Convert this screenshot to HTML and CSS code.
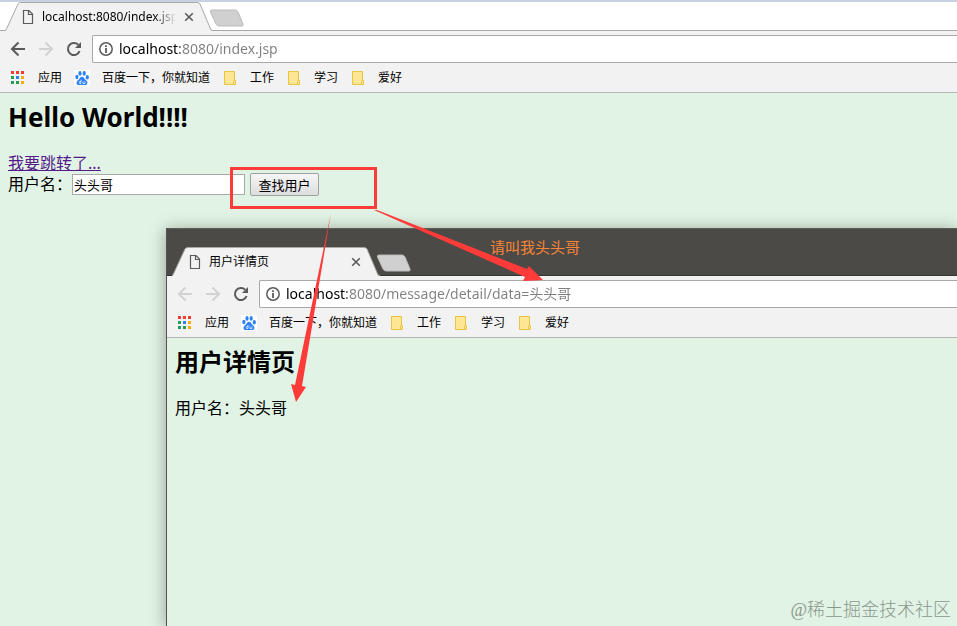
FILE: index.html
```html
<!DOCTYPE html>
<html lang="zh-CN">
<head>
  <meta charset="utf-8">
  <title>localhost:8080/index.jsp</title>
  <link rel="stylesheet" href="styles.css">
</head>
<body>
  <!-- shared icons -->
  <svg class="sprite" aria-hidden="true">
    <symbol id="tab-shape" viewBox="0 0 208 29" preserveAspectRatio="none">
      <path class="tab-fill" d="M0 29 L1 28 L13 2 Q14 .5 16 .5 H192 Q194 .5 195 2 L206 28 L208 29Z"/>
      <path class="tab-edge" d="M0 28.5 L1 28 L13 2 Q14 .5 16 .5 H192 Q194 .5 195 2 L206 28 L208 28.5"/>
    </symbol>
    <symbol id="new-tab" viewBox="0 0 36 18">
      <path class="new-tab-shape" d="M3 1 H26 Q28 1 29 3 L34 15 Q34.500 17 33 17 H10 Q8 17 7 15 L1.500 3 Q1 1 3 1Z"/>
    </symbol>
    <symbol id="page" viewBox="0 0 12 16">
      <path d="M1.500 1.500 H7 L10.500 5 V14.500 H1.500Z M6.500 1.500 V5.500 H10.500" fill="none" stroke="#5a5a5a" stroke-width="1.200"/>
    </symbol>
    <symbol id="close" viewBox="0 0 10 10">
      <path d="M1.200 1.200 L8.800 8.800 M8.800 1.200 L1.200 8.800" stroke="#5a5a5a" stroke-width="1.600"/>
    </symbol>
    <symbol id="back" viewBox="0 0 16 16">
      <path d="M15 8 H2.500 M8.500 1.500 L2 8 L8.500 14.500" fill="none" stroke="currentColor" stroke-width="2"/>
    </symbol>
    <symbol id="forward" viewBox="0 0 16 16">
      <path d="M1 8 H13.500 M7.500 1.500 L14 8 L7.500 14.500" fill="none" stroke="currentColor" stroke-width="2"/>
    </symbol>
    <symbol id="reload" viewBox="0 0 16 16">
      <path d="M13.600 10 A6 6 0 1 1 12.200 3.800" fill="none" stroke="currentColor" stroke-width="2"/>
      <path d="M15 1 V7 H9Z" fill="currentColor"/>
    </symbol>
    <symbol id="info" viewBox="0 0 14 14">
      <circle cx="7" cy="7" r="6.200" fill="none" stroke="#5a5a5a" stroke-width="1.500"/>
      <path d="M6.100 3.200 H7.900 V4.900 H6.100Z M6.100 6.100 H7.900 V10.900 H6.100Z" fill="#5a5a5a"/>
    </symbol>
    <symbol id="apps" viewBox="0 0 16 16">
      <path d="M1 1h3v3h-3z M6 1h3v3h-3z M11 1h3v3h-3z" fill="#f33b30"/>
      <path d="M1 6h3v3h-3z M1 11h3v3h-3z M6 11h3v3h-3z" fill="#259b57"/>
      <path d="M6 6h3v3h-3z" fill="#2b85f5"/>
      <path d="M11 6h3v3h-3z M11 11h3v3h-3z" fill="#f8ae06"/>
    </symbol>
    <symbol id="baidu" viewBox="0 0 16 16">
      <path d="M0 0h16v16H0z" fill="#fff"/>
      <g fill="#2c82f6">
        <ellipse cx="2.900" cy="7" rx="1.600" ry="2.200"/>
        <ellipse cx="6" cy="3.400" rx="1.600" ry="2.300"/>
        <ellipse cx="10.200" cy="3.400" rx="1.600" ry="2.300"/>
        <ellipse cx="13.300" cy="7.200" rx="1.600" ry="2.200"/>
        <path d="M8 6.700 C9.800 6.700 10.300 8.700 11.800 9.900 C15 12.500 13 15.500 10.500 15.100 C8.600 14.800 7.400 14.800 5.500 15.100 C2.500 15.500 1.200 12.300 4.300 9.900 C5.700 8.700 6.200 6.700 8 6.700Z"/>
      </g>
      <path d="M7 9.800 V13.500 H5.600 Q4.700 12.500 5.600 11.500 H7 M9 11.400 V13.500 H11 V11.400" fill="none" stroke="#fff" stroke-width=".7"/>
    </symbol>
    <symbol id="folder" viewBox="0 0 16 16">
      <path d="M2.500 1.500 H12.500 V10.500 H13.500 V14.500 H2.500Z" fill="#ffe695" stroke="#e8c443"/>
      <path d="M11.500 14.500 V11.500 Q11.500 10.500 12.500 10.500" fill="none" stroke="#e8c443"/>
    </symbol>
  </svg>

  <div class="browser">
    <div class="tabstrip">
      <div class="tab">
        <svg class="tab-bg"><use href="#tab-shape"/></svg>
        <svg class="tab-icon"><use href="#page"/></svg>
        <span class="tab-title fade">localhost:8080/index.jsp</span>
        <button class="tab-close" aria-label="关闭"><svg><use href="#close"/></svg></button>
      </div>
      <button class="new-tab" aria-label="新标签页"><svg><use href="#new-tab"/></svg></button>
    </div>
    <div class="toolbar">
      <button class="nav" aria-label="后退"><svg><use href="#back"/></svg></button>
      <button class="nav" aria-label="前进" disabled><svg><use href="#forward"/></svg></button>
      <button class="nav" aria-label="重新加载"><svg><use href="#reload"/></svg></button>
      <label class="omnibox">
        <svg><use href="#info"/></svg>
        <input class="url" type="text" aria-label="地址" value="localhost:8080/index.jsp">
      </label>
    </div>
    <nav class="bookmarks">
      <a href="#"><svg><use href="#apps"/></svg>应用</a>
      <a href="#"><svg><use href="#baidu"/></svg>百度一下，你就知道</a>
      <a href="#"><svg><use href="#folder"/></svg>工作</a>
      <a href="#"><svg><use href="#folder"/></svg>学习</a>
      <a href="#"><svg><use href="#folder"/></svg>爱好</a>
    </nav>
    <main class="content">
      <h2 class="latin">Hello World!!!!</h2>
      <a class="jump" href="#">我要跳转了...</a>
      <form class="row">
        <label for="name">用户名：</label>
        <input id="name" class="name" type="text" value="头头哥">
        <button class="search" type="button">查找用户</button>
      </form>
    </main>
  </div>

  <div class="browser popup">
    <div class="tabstrip">
      <div class="tab">
        <svg class="tab-bg"><use href="#tab-shape"/></svg>
        <svg class="tab-icon"><use href="#page"/></svg>
        <span class="tab-title">用户详情页</span>
        <button class="tab-close" aria-label="关闭"><svg><use href="#close"/></svg></button>
      </div>
      <button class="new-tab" aria-label="新标签页"><svg><use href="#new-tab"/></svg></button>
    </div>
    <div class="toolbar">
      <button class="nav" aria-label="后退" disabled><svg><use href="#back"/></svg></button>
      <button class="nav" aria-label="前进" disabled><svg><use href="#forward"/></svg></button>
      <button class="nav" aria-label="重新加载"><svg><use href="#reload"/></svg></button>
      <label class="omnibox">
        <svg><use href="#info"/></svg>
        <input class="url" type="text" aria-label="地址" value="localhost:8080/message/detail/data=头头哥">
      </label>
    </div>
    <nav class="bookmarks">
      <a href="#"><svg><use href="#apps"/></svg>应用</a>
      <a href="#"><svg><use href="#baidu"/></svg>百度一下，你就知道</a>
      <a href="#"><svg><use href="#folder"/></svg>工作</a>
      <a href="#"><svg><use href="#folder"/></svg>学习</a>
      <a href="#"><svg><use href="#folder"/></svg>爱好</a>
    </nav>
    <main class="content">
      <h2>用户详情页</h2>
      <p class="row">用户名：头头哥</p>
    </main>
  </div>

  <!-- annotations -->
  <div class="frame"></div>
  <svg class="arrows" width="600" height="420" aria-hidden="true">
    <path d="M374 210 L377 210 L527 269 L529 266 L543 280 L523 281 L525 277Z"/>
    <path d="M331 213 L302 386 L306 387 L296 402 L291 384 L295 385Z"/>
  </svg>
  <div class="note">请叫我头头哥</div>
  <div class="watermark">@稀土掘金技术社区</div>
</body>
</html>
```

FILE: styles.css
```css
* {
  box-sizing: border-box;
}

body {
  margin: 0;
  position: relative;
  min-height: 100vh;
  overflow: hidden;
  font-family: "Noto Sans", "Noto Sans CJK SC", sans-serif;
  font-size: 16px;
  color: #000;
  background: #e1f3e4;
}

button {
  padding: 0;
  border: none;
  background: none;
  font-family: inherit;
}

input {
  font-family: inherit;
}

svg {
  display: block;
  flex: none;
}

.sprite {
  position: absolute;
  width: 0;
  height: 0;
}

/* tabs */
.tabstrip {
  display: flex;
  align-items: flex-end;
  height: 31px;
  padding-left: 5px;
  border-top: 2px solid #c7d1e3;
  background: linear-gradient(#a9a9a9, #a9a9a9) bottom / 100% 1px no-repeat #fff;
}

.tab {
  position: relative;
  display: flex;
  align-items: center;
  width: 208px;
  height: 29px;
  padding-left: 17px;
}

.tab-bg {
  position: absolute;
  left: 0;
  top: 0;
  width: 100%;
  height: 100%;
}

.tab-fill {
  fill: #f2f2f2;
}

.tab-edge {
  fill: none;
  stroke: #a9a9a9;
}

.tab-icon {
  position: relative;
  width: 12px;
  height: 16px;
}

.tab-title {
  position: relative;
  width: 134px;
  margin-left: 8px;
  overflow: hidden;
  white-space: nowrap;
  font-size: 12px;
  line-height: 20px;
}

.fade {
  -webkit-mask-image: linear-gradient(to right, #000 112px, transparent 134px);
  mask-image: linear-gradient(to right, #000 112px, transparent 134px);
}

.tab-close {
  position: relative;
  margin-left: 8px;
}

.tab-close svg {
  width: 10px;
  height: 10px;
}

.new-tab {
  align-self: flex-end;
  margin: 0 0 4px -4px;
}

.new-tab svg {
  width: 36px;
  height: 18px;
}

.new-tab-shape {
  fill: #d0d0d0;
  stroke: #b9b9b9;
}

/* toolbar */
.toolbar {
  display: flex;
  padding: 4px 0 0 4px;
  background: #f2f2f2;
}

.nav {
  display: flex;
  align-items: center;
  justify-content: center;
  width: 28px;
  height: 28px;
  color: #5a5a5a;
}

.nav:disabled {
  color: #d2d2d2;
}

.nav svg {
  width: 16px;
  height: 16px;
}

.omnibox {
  display: flex;
  flex: 1;
  align-items: center;
  height: 28px;
  margin-left: 4px;
  padding-left: 6px;
  border: 1px solid #a9a9a9;
  border-right: none;
  border-radius: 2px 0 0 2px;
  background: #fff;
}

.omnibox svg {
  width: 14px;
  height: 14px;
}

.url {
  flex: 1;
  min-width: 0;
  height: 24px;
  margin-left: 6px;
  padding: 0 0 2px;
  border: none;
  outline: none;
  font-size: 14px;
  /* host part dark, the rest grey */
  color: transparent;
  background: linear-gradient(to right, #000 61px, #808080 61px);
  -webkit-background-clip: text;
  background-clip: text;
}

.bookmarks {
  display: flex;
  align-items: center;
  gap: 12px;
  height: 30px;
  padding-left: 10px;
  border-bottom: 1px solid #b3b5b3;
  background: #f2f2f2;
}

.bookmarks a {
  display: flex;
  align-items: center;
  gap: 12px;
  padding-top: 1px;
  font-size: 12px;
  line-height: 20px;
  color: #000;
  text-decoration: none;
  white-space: nowrap;
}

.bookmarks svg {
  width: 16px;
  height: 16px;
}

/* page */
.content {
  padding: 8px;
}

.content h2 {
  margin: 0 0 20px;
  font-size: 24px;
  line-height: 32px;
}

.content .latin {
  font-size: 26px;
}

.jump {
  display: block;
  width: max-content;
  line-height: 21px;
  color: #551a8b;
}

.row {
  display: flex;
  align-items: center;
  height: 21px;
  margin: 0;
  line-height: 21px;
}

.name {
  width: 173px;
  height: 21px;
  padding: 1px;
  border: 1px solid #a9a9a9;
  font-size: 13px;
  background: #fff;
}

.search {
  flex: none;
  width: 69px;
  height: 23px;
  margin-left: 5px;
  border: 1px solid #a0a0a0;
  border-radius: 2px;
  font-size: 13px;
  line-height: 20px;
  background: linear-gradient(#f6f6f6, #dddddd);
}

/* second window, on top of the first */
.popup {
  position: absolute;
  left: 166px;
  top: 228px;
  right: 0;
  bottom: 0;
  border-left: 1px solid #52524e;
  background: #e1f3e4;
  box-shadow: 0 2px 16px rgba(0, 0, 0, 0.35);
}

.popup .tabstrip {
  height: 48px;
  border-top: 1px solid #5c5f58;
  background: linear-gradient(#353432, #353432) bottom / 100% 1px no-repeat #4c4a47;
}

.popup .tab-edge {
  stroke: #3c3b39;
}

.popup .new-tab-shape {
  stroke: #353432;
}

/* annotations */
.frame {
  position: absolute;
  left: 230px;
  top: 167px;
  width: 147px;
  height: 42px;
  border: 3px solid #fd3b38;
}

.arrows {
  position: absolute;
  left: 0;
  top: 0;
  fill: #fd3b38;
  pointer-events: none;
}

.note {
  position: absolute;
  left: 490px;
  top: 237px;
  font-size: 15px;
  line-height: 20px;
  color: #f98535;
}

.watermark {
  position: absolute;
  right: 6px;
  bottom: 4px;
  font-family: "Liberation Serif", "Noto Sans CJK SC", serif;
  font-size: 18px;
  font-weight: 300;
  line-height: 24px;
  color: #8b968d;
}
```
